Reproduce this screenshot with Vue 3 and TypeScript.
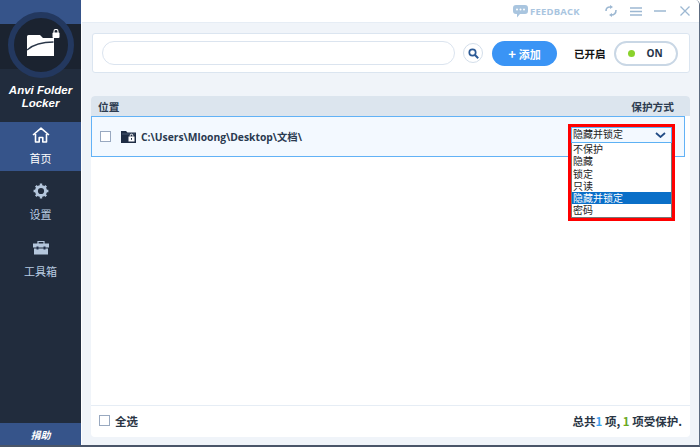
<script setup lang="ts">
const options: string[] = ['不保护', '隐藏', '锁定', '只读', '隐藏并锁定', '密码']
const selected = '隐藏并锁定'
</script>

<template>
  <div class="window">
    <aside class="side">
      <div class="logo-band">
        <div class="logo-ring">
          <svg width="27" height="21" viewBox="0 0 27 21" class="folder">
            <path d="M0 1.500Q0 0 1.500 0H13l3 3h11v18H0z" fill="#fff" />
            <path d="M0 15Q9 7 26.500 7" fill="none" stroke="#2a3648" stroke-width="1.300" />
          </svg>
          <svg width="8" height="9" viewBox="0 0 8 9" class="lock">
            <rect x="0.500" y="3.500" width="7" height="5.500" rx="1" fill="#fff" />
            <path d="M2 4V2.400a2 2 0 0 1 4 0V4" fill="none" stroke="#fff" stroke-width="1.100" />
          </svg>
        </div>
      </div>
      <div class="brand">Anvi Folder<br />Locker</div>
      <nav class="nav">
        <div class="nav-item active">
          <svg width="18" height="16" viewBox="0 0 18 16">
            <path d="M1 8 9 1.200 17 8M3.500 7v8h3.700v-4.500h3.600V15h3.700V7" fill="none" stroke="#fff" stroke-width="1.600" stroke-linejoin="round" />
          </svg>
          <span>首页</span>
        </div>
        <div class="nav-item">
          <svg width="16" height="16" viewBox="0 0 16 16">
            <circle cx="8" cy="8" r="4.600" fill="none" stroke="#b4c6dc" stroke-width="3" />
            <path d="M8 .6v2.400M8 13v2.400M.6 8H3M13 8h2.400M2.800 2.800l1.700 1.700M11.500 11.500l1.700 1.700M13.200 2.800l-1.700 1.700M4.500 11.500l-1.700 1.700" stroke="#b4c6dc" stroke-width="2.400" />
          </svg>
          <span>设置</span>
        </div>
        <div class="nav-item tools">
          <svg width="16" height="15" viewBox="0 0 16 15">
            <path d="M5 4V1.500h6V4" fill="none" stroke="#b4c6dc" stroke-width="1.200" />
            <rect y="3.500" width="16" height="4" fill="#b4c6dc" />
            <rect x="1" y="8.500" width="14" height="6" fill="#b4c6dc" />
            <rect x="3.500" y="6.500" width="2" height="3" fill="#22304a" />
            <rect x="10.500" y="6.500" width="2" height="3" fill="#22304a" />
          </svg>
          <span>工具箱</span>
        </div>
      </nav>
      <div class="donate">捐助</div>
    </aside>

    <main class="main">
      <header class="title-bar">
        <svg width="15" height="13" viewBox="0 0 15 13">
          <path d="M3 0h9a3 3 0 0 1 3 3v3a3 3 0 0 1-3 3H7l-3 3.500V9H3a3 3 0 0 1-3-3V3a3 3 0 0 1 3-3z" fill="#a9c5df" />
          <circle cx="4" cy="4.500" r="1" fill="#fff" /><circle cx="7.500" cy="4.500" r="1" fill="#fff" /><circle cx="11" cy="4.500" r="1" fill="#fff" />
        </svg>
        <span class="feedback">FEEDBACK</span>
        <svg class="t-refresh" width="12" height="12" viewBox="0 0 12 12">
          <path d="M1 6q0-4 4-4h1M11 5q0 5-5 5" fill="none" stroke="#9db8d2" stroke-width="1.600" />
          <path d="M5 0l3 2-3 2zM7 8l-3 2 3 2z" fill="#9db8d2" />
        </svg>
        <svg class="t-menu" width="12" height="9" viewBox="0 0 12 9">
          <path d="M0 1h12M0 4.500h12M0 8h12" stroke="#9db8d2" stroke-width="1.400" />
        </svg>
        <svg class="t-min" width="12" height="2" viewBox="0 0 12 2"><path d="M0 1h12" stroke="#9db8d2" stroke-width="1.400" /></svg>
        <svg class="t-close" width="10" height="10" viewBox="0 0 10 10"><path d="M.5.5l9 9M9.500.5l-9 9" stroke="#9db8d2" stroke-width="1.300" /></svg>
      </header>

      <section class="toolbar">
        <div class="search-input"></div>
        <button class="search-btn" type="button">
          <svg width="11" height="11" viewBox="0 0 11 11">
            <circle cx="4.500" cy="4.500" r="3.200" fill="none" stroke="#2c5a96" stroke-width="1.700" />
            <path d="M7 7l3.200 3.200" stroke="#2c5a96" stroke-width="2" />
          </svg>
        </button>
        <button class="add-btn" type="button"><span class="plus">+</span>添加</button>
        <span class="state">已开启</span>
        <div class="toggle"><i></i><b>ON</b></div>
      </section>

      <section class="panel">
        <div class="thead"><span>位置</span><span>保护方式</span></div>
        <div class="row">
          <span class="check"></span>
          <svg class="row-folder" width="15" height="13" viewBox="0 0 15 13">
            <path d="M0 1h5l1.500 1.500H15V13H0z" fill="#1f2d44" />
            <path d="M1 4h13" stroke="#5a6b84" stroke-width="0.700" />
            <rect x="7.500" y="6.500" width="6" height="5" fill="#fff" />
            <path d="M9.200 6.500V5.500a1.300 1.300 0 0 1 2.600 0v1" fill="none" stroke="#fff" />
            <rect x="10" y="8" width="1" height="1.800" fill="#1f2d44" />
          </svg>
          <span class="path">C:\Users\Mloong\Desktop\文档\</span>
          <div class="picker">
            <div class="select-box">
              <span>隐藏并锁定</span>
              <svg width="11" height="6" viewBox="0 0 11 6"><path d="M1 1l4.500 4L10 1" fill="none" stroke="#234d86" stroke-width="1.800" /></svg>
            </div>
            <ul class="list">
              <li v-for="o in options" :key="o" :class="{ on: o === selected }">{{ o }}</li>
            </ul>
          </div>
        </div>
        <div class="spacer"></div>
        <div class="foot">
          <label class="all"><span class="check"></span>全选</label>
          <div class="total">总共<em class="blue">1</em> 项, <em class="green">1</em> 项受保护.</div>
        </div>
      </section>
    </main>
  </div>
</template>

<style>
html, body { margin: 0; padding: 0; background: #fff; }
</style>

<style scoped>
.window {
  width: 700px;
  height: 447px;
  box-sizing: border-box;
  display: flex;
  overflow: hidden;
  background: #f0f4f9;
  border-bottom: 2px solid #4a5568;
  border-right: 1px solid #5c6b80;
  border-top-right-radius: 5px;
  font-family: "Noto Sans CJK SC", "Liberation Sans", sans-serif;
}
.side {
  width: 81px;
  flex: none;
  display: flex;
  flex-direction: column;
  background: #212c3d;
  border-right: 1px solid #fff;
  padding-top: 24px;
  background-image: linear-gradient(#36548a, #36548a);
  background-size: 100% 24px;
  background-repeat: no-repeat;
}
.logo-band {
  height: 45px;
  display: flex;
  justify-content: center;
  flex: none;
  background: #1b2330;
}
.logo-ring {
  width: 66px;
  height: 66px;
  box-sizing: border-box;
  margin-top: -12px;
  border: 6px solid #23385f;
  border-radius: 50%;
  background: #1b2330;
  position: relative;
  flex: none;
}
.folder { position: absolute; left: 13px; top: 17px; }
.lock { position: absolute; left: 38px; top: 11px; }
.brand {
  margin-top: 15px;
  height: 38px;
  text-align: center;
  color: #fff;
  font: italic bold 11.500px/13.400px "Liberation Sans", sans-serif;
}
.nav { display: flex; flex-direction: column; }
.nav-item {
  height: 50px;
  box-sizing: border-box;
  padding-top: 5px;
  display: flex;
  flex-direction: column;
  align-items: center;
  color: #b9cde3;
  font-size: 11px;
  line-height: 14px;
  gap: 8px;
  margin-bottom: 7px;
}
.nav-item.active { background: #36548a; color: #fff; height: 49px; }
.nav-item.tools { gap: 9px; }
.donate {
  margin-top: auto;
  height: 22px;
  line-height: 24px;
  background: #36548a;
  color: #fff;
  text-align: center;
  font-size: 10px;
  font-style: italic;
  font-weight: 700;
}
.main { flex: 1; display: flex; flex-direction: column; min-width: 0; }
.title-bar {
  height: 23px;
  box-sizing: border-box;
  background: #fff;
  border-bottom: 1px solid #e6edf5;
  display: flex;
  align-items: center;
  padding-left: 431px;
  flex: none;
}
.feedback { margin-left: 2px; font: 700 9.500px "Open Sans", "Liberation Sans", sans-serif; color: #a9c5df; letter-spacing: 0.200px; }
.t-refresh { margin-left: 25px; }
.t-menu { margin-left: 13px; }
.t-min { margin-left: 12px; }
.t-close { margin-left: 14px; }
.toolbar {
  margin: 10px 9px 0 10px;
  height: 40px;
  box-sizing: border-box;
  background: #fff;
  border: 1px solid #dbe5f0;
  border-radius: 3px;
  display: flex;
  align-items: center;
  padding-left: 9px;
  flex: none;
}
.search-input {
  width: 351px;
  height: 22px;
  border: 1px solid #dbe4ef;
  border-radius: 12px;
  background: #fff;
}
.search-btn {
  margin-left: 8px;
  width: 20px;
  height: 20px;
  padding: 0;
  border: 1px solid #d3deea;
  border-radius: 50%;
  background: #fff;
  display: flex;
  align-items: center;
  justify-content: center;
}
.add-btn {
  margin-left: 9px;
  width: 65px;
  height: 25px;
  padding: 0;
  border: 0;
  border-radius: 13px;
  background: #3a94f5;
  color: #fff;
  font: 700 11px "Noto Sans CJK SC", sans-serif;
}
.plus { font-size: 13px; margin-right: 3px; }
.state { margin-left: 17px; font-size: 10.500px; font-weight: 700; color: #111; }
.toggle {
  margin-left: 8px;
  width: 64px;
  height: 25px;
  box-sizing: border-box;
  border: 2px solid #c9d7e5;
  border-radius: 13px;
  display: flex;
  align-items: center;
  padding-left: 12px;
  background: #fff;
}
.toggle i { width: 7px; height: 7px; border-radius: 50%; background: #8ad22c; }
.toggle b { margin-left: 12px; font: 700 10px "Open Sans", "Liberation Sans", sans-serif; color: #243348; }
.panel {
  margin: 23px 9px 8px 9px;
  flex: 1;
  display: flex;
  flex-direction: column;
  background: #fff;
  border-radius: 4px;
  min-height: 0;
}
.thead {
  height: 20px;
  flex: none;
  background: #dce5ee;
  border-radius: 4px 4px 0 0;
  display: flex;
  justify-content: space-between;
  align-items: center;
  padding: 0 16px 0 7px;
  font-size: 10.700px;
  font-weight: 700;
  color: #2d3c50;
}
.row {
  height: 41px;
  margin-right: 5px;
  box-sizing: border-box;
  flex: none;
  border: 1px solid #62b2f6;
  background: #f3f9ff;
  display: flex;
  align-items: center;
  padding-left: 8px;
  position: relative;
}
.check {
  width: 9px;
  height: 9px;
  border: 1px solid #99a9c0;
  background: #fff;
  display: inline-block;
  flex: none;
}
.row-folder { margin-left: 10px; }
.path {
  margin-left: 5px;
  font: 700 10.300px "Open Sans", "Liberation Sans", "Noto Sans CJK SC", sans-serif;
  color: #2a3a50;
}
.picker {
  position: absolute;
  left: 476px;
  top: 7px;
  width: 107px;
  box-sizing: border-box;
  border: 3px solid #f00;
  background: #fff;
  font: 10px "Liberation Sans", "Noto Sans CJK SC", sans-serif;
  color: #222;
  z-index: 2;
}
.select-box {
  height: 16px;
  box-sizing: border-box;
  border: 1px solid #5db1f4;
  background: #f3f9ff;
  display: flex;
  align-items: center;
  justify-content: space-between;
  padding: 0 5px 0 1px;
  line-height: 14px;
}
.list {
  list-style: none;
  margin: 0;
  padding: 0;
  border: 1px solid #777;
  border-top: 0;
}
.list li { height: 12.300px; line-height: 14px; padding-left: 1px; }
.list li.on { background: #0a6fc8; color: #fff; }
.spacer { flex: 1; }
.foot {
  height: 32px;
  box-sizing: border-box;
  flex: none;
  border-top: 1px solid #e6edf5;
  display: flex;
  align-items: center;
  justify-content: space-between;
  padding: 0 8px 2px 8px;
  font-size: 11.500px;
  font-weight: 700;
  color: #2a3544;
}
.all { display: flex; align-items: center; gap: 5px; }
.total em { font-style: normal; }
.blue { color: #3aa0ee; }
.green { color: #6aa81e; }
</style>
